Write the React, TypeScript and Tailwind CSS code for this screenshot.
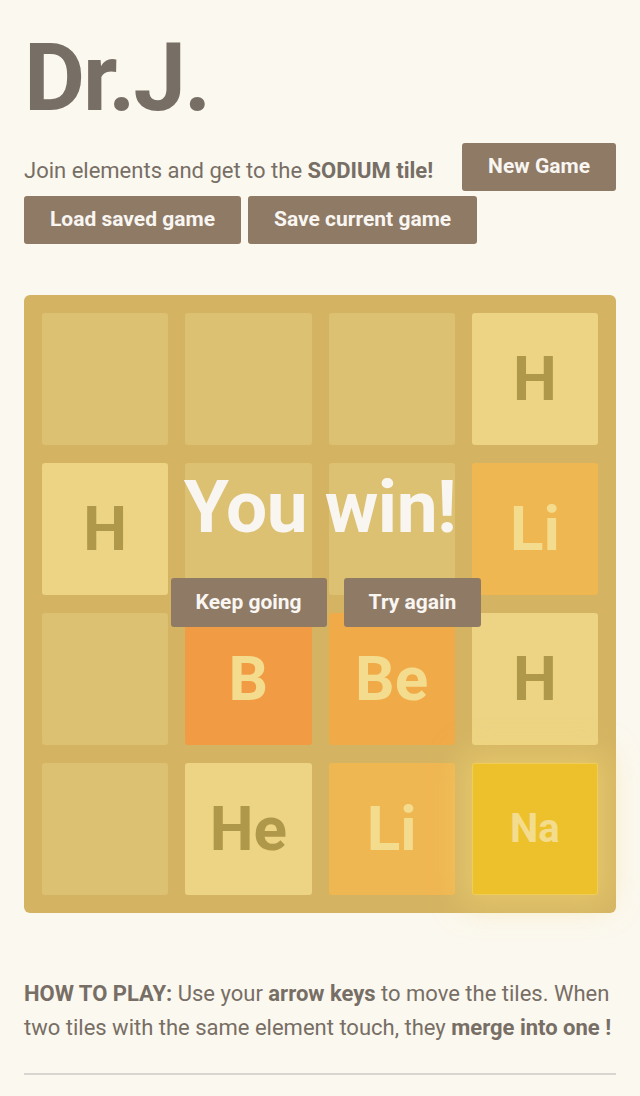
const tileStyles: Record<string, string> = {
  H: "bg-[#ecd484] text-[#b0984a] text-[62px]",
  He: "bg-[#ecd484] text-[#b0984a] text-[62px]",
  Li: "bg-[#efb752] text-[#f4dc8e] text-[62px]",
  Be: "bg-[#f0aa48] text-[#f4dc8e] text-[62px]",
  B: "bg-[#f19b45] text-[#f4dc8e] text-[62px]",
  Na: "bg-[#edc12c] text-[#f4dc8e] text-[40px] shadow-[0_0_30px_10px_rgba(243,215,116,0.55),inset_0_0_0_1px_rgba(255,255,255,0.2)]",
};

const grid: (string | null)[][] = [
  [null, null, null, "H"],
  ["H", null, null, "Li"],
  [null, "B", "Be", "H"],
  [null, "He", "Li", "Na"],
];

const Tile = ({ el }: { el: string | null }) => {
  if (!el) return <div className="rounded-[3px] bg-[#dcc172]" />;
  return (
    <div
      className={`flex items-center justify-center rounded-[3px] font-bold leading-none ${tileStyles[el]}`}
    >
      {el}
    </div>
  );
};

const Button = ({ children }: { children: string }) => (
  <button className="h-12 rounded-[3px] bg-[#8f7a66] px-[26px] text-[21px] font-bold text-[#f9f6f2]">
    {children}
  </button>
);

function App() {
  return (
    <div className="min-h-[1096px] bg-[#fbf8ef] font-['Roboto',sans-serif] text-[#776e65]">
      <div className="mx-6 pt-[28px]">
        <h1 className="text-[94px] font-bold leading-[100px] tracking-[-2px]">
          Dr.J.
        </h1>
        <div className="mt-[15px] flex items-center justify-between">
          <p className="pt-[6px] text-[22px]">
            Join elements and get to the <strong>SODIUM tile!</strong>
          </p>
          <Button>New Game</Button>
        </div>
        <div className="mt-[5px] flex gap-[7px]">
          <Button>Load saved game</Button>
          <Button>Save current game</Button>
        </div>

        <div className="relative mt-[51px] rounded-[6px] bg-[#d4b462] p-[18px]">
          <div className="grid grid-cols-4 grid-rows-[repeat(4,132px)] gap-x-[17px] gap-y-[18px]">
            {grid.flat().map((el, i) => (
              <Tile key={i} el={el} />
            ))}
          </div>
          <div className="absolute inset-0 flex flex-col items-center">
            <p className="mt-[170px] text-[73px] font-bold leading-[84px] tracking-[-0.5px] text-[#f9f6f2]">
              You win!
            </p>
            <div className="ml-[12px] mt-[29px] flex gap-[17px]">
              <button className="h-[49px] rounded-[3px] bg-[#8f7a66] px-[25px] text-[21px] font-bold text-[#f9f6f2]">
                Keep going
              </button>
              <button className="h-[49px] rounded-[3px] bg-[#8f7a66] px-[25px] text-[21px] font-bold text-[#f9f6f2]">
                Try again
              </button>
            </div>
          </div>
        </div>

        <p className="mt-[64px] text-[22px] leading-[34px]">
          <strong>HOW TO PLAY:</strong> Use your <strong>arrow keys</strong> to
          move the tiles. When two tiles with the same element touch, they{" "}
          <strong>merge into one !</strong>
        </p>
        <hr className="mt-[28px] border-t-2 border-[#d8d4d0]" />
      </div>
    </div>
  );
}

export default App;
